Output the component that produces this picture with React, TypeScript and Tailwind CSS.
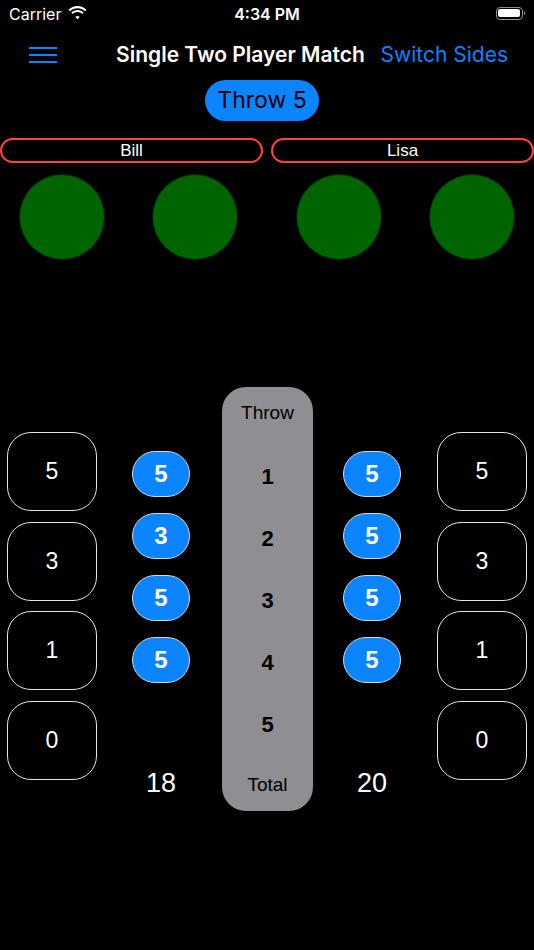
import React from 'react'

const sans = { fontFamily: 'Inter, "Liberation Sans", sans-serif' }
const helv = { fontFamily: '"Liberation Sans", Arial, sans-serif' }

function Wifi() {
  return (
    <svg width="19" height="14" viewBox="0 0 19 14" fill="white">
      <path d="M9.5 2.2c2.9 0 5.5 1.1 7.5 3l1.5-1.5C16.1 1.4 12.9 0 9.5 0S2.9 1.4.5 3.7L2 5.2c2-1.9 4.6-3 7.5-3z" />
      <path d="M9.5 6.1c1.8 0 3.5.7 4.7 1.9l1.5-1.5C14.1 4.9 11.9 4 9.5 4S4.9 4.9 3.3 6.5L4.8 8c1.2-1.2 2.9-1.9 4.7-1.9z" />
      <path d="M9.5 10c-.8 0-1.6.3-2.2.9L9.5 13.2l2.2-2.3c-.6-.6-1.4-.9-2.2-.9z" />
    </svg>
  )
}

function Battery() {
  return (
    <div className="flex items-center">
      <div className="w-[27px] h-[13px] rounded-[4px] border border-[#8e8e93] p-[1.5px]">
        <div className="w-full h-full rounded-[2px] bg-white" />
      </div>
      <div className="w-[1.5px] h-[4px] bg-[#8e8e93] rounded-r-sm ml-[1px]" />
    </div>
  )
}

function ScoreBox({ v }: { v: number }) {
  return (
    <div className="w-[90px] h-[79px] rounded-[24px] border border-[#e5e5e5] flex items-center justify-center text-white text-[23px]" style={helv}>
      {v}
    </div>
  )
}

function Pill({ v }: { v: number }) {
  return (
    <div className="w-[58px] h-[46px] rounded-full bg-[#0a84ff] border border-[#d8d8d8] flex items-center justify-center text-white text-[24px] font-bold" style={helv}>
      {v}
    </div>
  )
}

function ThrowColumn({ scores, total }: { scores: number[]; total: number }) {
  return (
    <div className="w-[58px] flex flex-col items-center pt-[64px]">
      <div className="flex flex-col gap-[16px]">
        {scores.map((s, i) => <Pill key={i} v={s} />)}
      </div>
      <div className="mt-[84px] h-[32px] leading-[32px] text-white text-[27px]" style={helv}>{total}</div>
    </div>
  )
}

export default function App() {
  return (
    <div className="w-[534px] h-[950px] bg-black overflow-hidden select-none" style={sans}>
      {/* status bar */}
      <div className="h-[28px] flex items-center px-[9px] text-white relative">
        <span className="text-[16px]">Carrier</span>
        <span className="ml-[7px] mt-[-2px]"><Wifi /></span>
        <span className="absolute left-0 right-0 text-center text-[16px] font-semibold">4:34 PM</span>
        <span className="ml-auto mt-[-2px]"><Battery /></span>
      </div>

      {/* nav */}
      <div className="h-[52px] pt-[2px] flex items-center pl-[29px] pr-[26px]">
        <div className="w-[28px] flex flex-col gap-[5px]">
          <div className="h-[2px] bg-[#0a84ff]" />
          <div className="h-[2px] bg-[#0a84ff]" />
          <div className="h-[2px] bg-[#0a84ff]" />
        </div>
        <div className="ml-[59px] text-white text-[21px] font-semibold">Single Two Player Match</div>
        <div className="ml-auto text-[#0a84ff] text-[21px]">Switch Sides</div>
      </div>

      <div className="flex pl-[205px]">
        <div className="h-[41px] w-[114px] rounded-full bg-[#0a84ff] flex items-center justify-center text-black text-[23px]">Throw 5</div>
      </div>

      {/* players */}
      <div className="mt-[17px] flex gap-[8px]">
        {['Bill', 'Lisa'].map(n => (
          <div key={n} className="flex-1 h-[25px] rounded-full border-2 border-[#ff453a] flex items-center justify-center text-white text-[17px]" style={helv}>
            {n}
          </div>
        ))}
      </div>

      <div className="mt-[12px] flex pl-[20px]">
        <div className="w-[84px] h-[84px] rounded-full bg-[#006400] ring-1 ring-[#062606]" />
        <div className="ml-[49px] w-[84px] h-[84px] rounded-full bg-[#006400] ring-1 ring-[#062606]" />
        <div className="ml-[60px] w-[84px] h-[84px] rounded-full bg-[#006400] ring-1 ring-[#062606]" />
        <div className="ml-[49px] w-[84px] h-[84px] rounded-full bg-[#006400] ring-1 ring-[#062606]" />
      </div>

      {/* scoreboard */}
      <div className="mt-[128px] flex items-start pl-[7px]">
        <div className="mt-[45px] flex flex-col gap-[10.5px]">
          {[5, 3, 1, 0].map(v => <ScoreBox key={v} v={v} />)}
        </div>
        <div className="ml-[35px]"><ThrowColumn scores={[5, 3, 5, 5]} total={18} /></div>
        <div className="ml-[32px] w-[91px] h-[424px] rounded-[24px] bg-[#8e8e93] flex flex-col items-center pt-[15px] text-black" style={helv}>
          <div className="h-[22px] leading-[22px] text-[19px]">Throw</div>
          <div className="mt-[21px] flex flex-col">
            {[1, 2, 3, 4, 5].map(n => (
              <div key={n} className="h-[62px] flex items-center justify-center text-[22px] font-bold">{n}</div>
            ))}
          </div>
          <div className="mt-[19px] h-[22px] leading-[22px] text-[19px]">Total</div>
        </div>
        <div className="ml-[30px]"><ThrowColumn scores={[5, 5, 5, 5]} total={20} /></div>
        <div className="ml-[36px] mt-[45px] flex flex-col gap-[10.5px]">
          {[5, 3, 1, 0].map(v => <ScoreBox key={v} v={v} />)}
        </div>
      </div>
    </div>
  )
}
